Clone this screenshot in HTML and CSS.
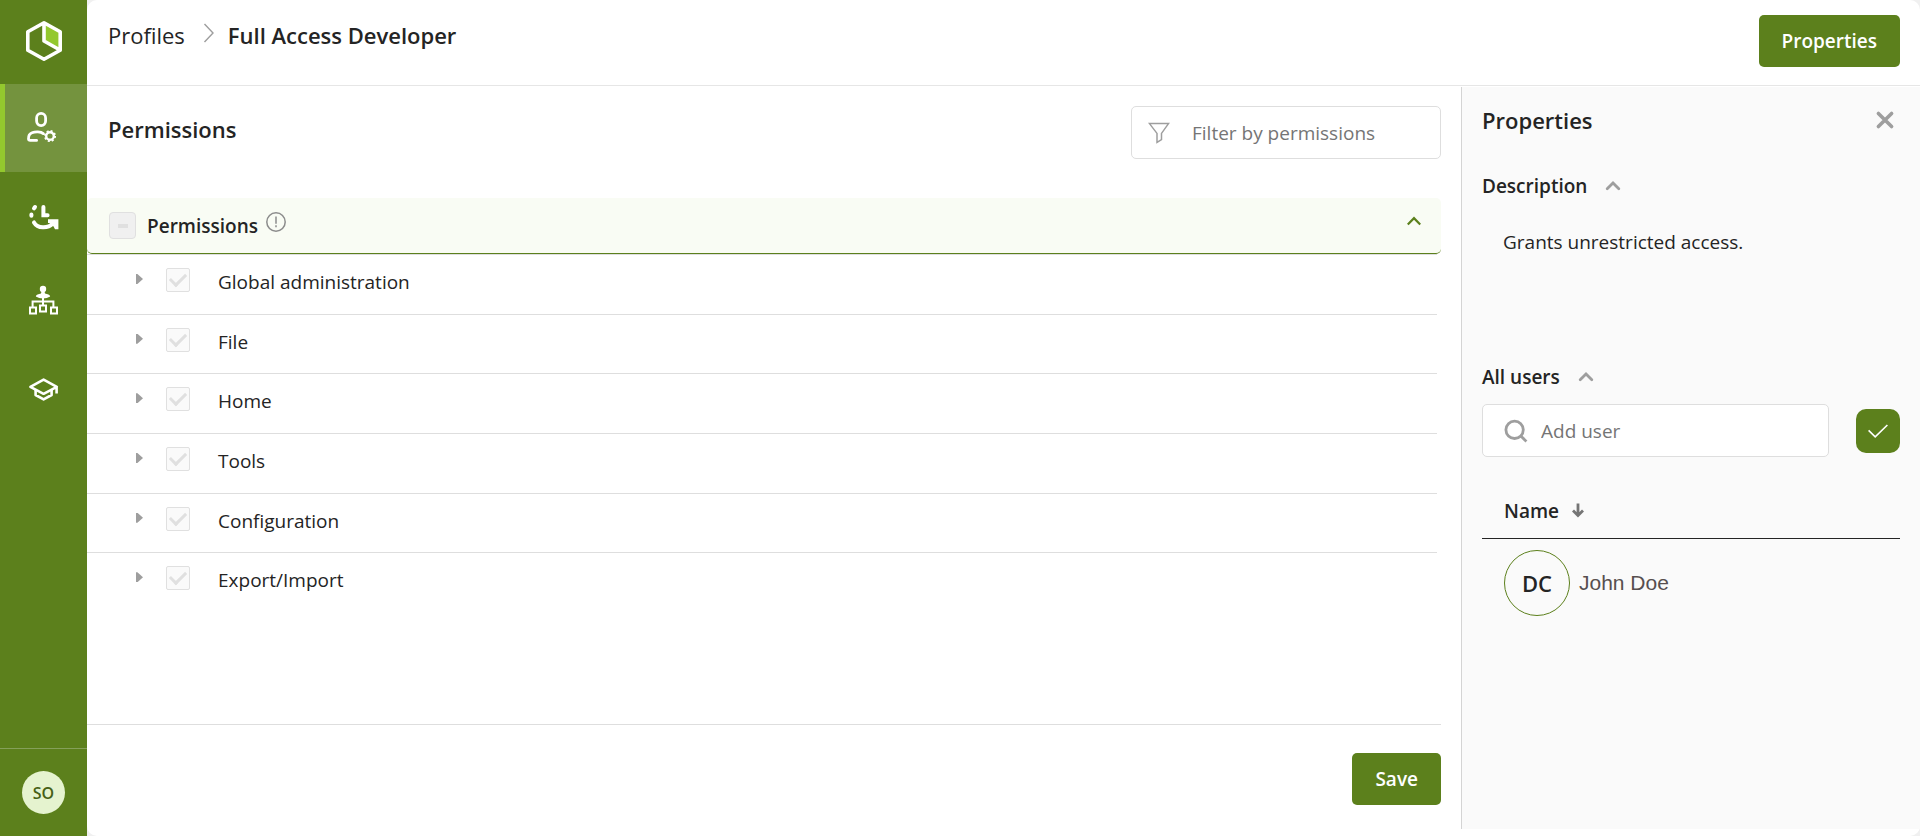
FILE: index.html
```html
<!DOCTYPE html>
<html lang="en">
<head>
    <meta charset="UTF-8">
    <meta name="viewport" content="width=device-width, initial-scale=1.0">
    <title>Full Access Developer - Profiles</title>
    <link rel="stylesheet" href="styles.css">
</head>
<body>

    <!-- Sidebar -->
    <nav class="sidebar">
        <a href="#" class="logo" aria-label="Home">
            <svg width="38" height="42" viewBox="0 1 38 42">
                <path d="M19 2.8 L34.7 11.5 V29 L19 19.8 Z" fill="#93c82e"/>
                <path d="M19 2.8 L35.2 11.8 V30.2 L19 39.2 L2.8 30.2 V11.8 Z M19 3 V21 L34.5 29.8" fill="none" stroke="#fff" stroke-width="3.6" stroke-linejoin="round"/>
            </svg>
        </a>
        <a href="#" class="nav-item active" aria-label="Profiles">
            <svg width="32" height="32" viewBox="2 1 32 32" fill="none" stroke="#fff" stroke-width="2.8" stroke-linecap="round">
                <rect x="10.6" y="2.4" width="9" height="12.2" rx="4.5"/>
                <path d="M17.3 22.6 C14.8 20.4 9.2 20.4 6 21.8 C3 23 2.4 26 2.5 28 Q2.6 29.4 4.2 29.4 H10.6"/>
                <circle cx="24" cy="25" r="3.8" stroke-width="2.4"/>
                <circle cx="24" cy="25" r="5.1" stroke-width="1.9" stroke-dasharray="2 2" stroke-linecap="butt"/>
            </svg>
        </a>
        <a href="#" class="nav-item" aria-label="Processes">
            <svg width="32" height="32" viewBox="0 0 32 32" fill="none" stroke="#fff" stroke-width="4" stroke-linecap="round">
                <path d="M15.4 7 V15.2 H19.6"/>
                <path d="M6 8.4 L7 7 M3.4 14.4 V15.8"/>
                <path d="M6 22.4 C9.6 28.6 19.6 29 25 23.4"/>
                <path d="M20 19.3 H30.4 V29.3 H27 L25.6 26.4 L21.4 23 H20 Z" fill="#fff" stroke="none"/>
            </svg>
        </a>
        <a href="#" class="nav-item" aria-label="Organization">
            <svg width="32" height="32" viewBox="0 4 32 32" fill="none" stroke="#fff" stroke-width="2">
                <circle cx="15" cy="5" r="3.2" fill="#fff" stroke="none"/>
                <path d="M13.6 7 H16.4 L17 9.6 C19.4 10 22 11 22.2 12.4 Q19 14.4 15 14.4 Q11 14.4 7.8 12.4 C8 11 10.6 10 13 9.6 Z" fill="#fff" stroke="none"/>
                <path d="M15 14 V21 M4.6 23 V17.4 H25.4 V23"/>
                <path d="M2 23.4 H8 V29.4 H2 Z M12 21.4 H18 V27.4 H12 Z M23 23.4 H29 V29.4 H23 Z"/>
            </svg>
        </a>
        <a href="#" class="nav-item" aria-label="Learning">
            <svg width="32" height="32" viewBox="0 3 32 32" fill="none" stroke="#fff" stroke-width="2.6" stroke-linejoin="round">
                <path d="M2.4 13.8 L15.6 6.6 L28.8 13.8 L15.6 20.8 Z M28.6 14 V20.4"/>
                <path d="M7.6 17 V22 L15.6 26.4 L23.6 22 V17"/>
            </svg>
        </a>
        <div class="sidebar-user">
            <button class="user-badge" type="button">SO</button>
        </div>
    </nav>

    <div class="page">
        <!-- Header -->
        <header class="header">
            <div class="breadcrumb">
                <a href="#">Profiles</a>
                <svg width="12" height="20" viewBox="0 0 12 20" fill="none" stroke="#9e9e9e" stroke-width="1.4">
                    <path d="M1.5 1 L10 10 L1.5 19"/>
                </svg>
                <h1>Full Access Developer</h1>
            </div>
            <button class="btn" type="button">Properties</button>
        </header>

        <div class="content">
            <!-- Permissions -->
            <main class="main">
                <div class="toolbar">
                    <h2>Permissions</h2>
                    <label class="field filter">
                        <svg width="22" height="22" viewBox="0 0 22 22" fill="none" stroke="#9e9e9e" stroke-width="1.5">
                            <path d="M1.5 1.6 H20.5 L13.5 11.4 V17.6 L9 20.4 V11.4 Z"/>
                        </svg>
                        <input type="text" placeholder="Filter by permissions" aria-label="Filter by permissions">
                    </label>
                </div>

                <div class="group-header">
                    <input type="checkbox" class="check-all" id="all" disabled>
                    <label for="all">Permissions</label>
                    <svg class="info" width="20" height="20" viewBox="0 0 20 20" fill="none" stroke="#8c8c8c" stroke-width="1.5">
                        <circle cx="10" cy="10" r="9.2"/>
                        <path d="M10 4.6 V11.8 M10 13.2 V15.2"/>
                    </svg>
                    <button class="icon-btn collapse" type="button" aria-label="Collapse">
                        <svg width="14" height="10" viewBox="0 0 14 10" fill="none" stroke="#5c801c" stroke-width="2.2">
                            <path d="M0.8 8.6 L7 2.2 L13.2 8.6"/>
                        </svg>
                    </button>
                </div>

                <ul class="permissions">
                    <li>
                        <button class="expand" type="button" aria-label="Expand"></button>
                        <input type="checkbox" id="p1" checked disabled>
                        <label for="p1">Global administration</label>
                    </li>
                    <li>
                        <button class="expand" type="button" aria-label="Expand"></button>
                        <input type="checkbox" id="p2" checked disabled>
                        <label for="p2">File</label>
                    </li>
                    <li>
                        <button class="expand" type="button" aria-label="Expand"></button>
                        <input type="checkbox" id="p3" checked disabled>
                        <label for="p3">Home</label>
                    </li>
                    <li>
                        <button class="expand" type="button" aria-label="Expand"></button>
                        <input type="checkbox" id="p4" checked disabled>
                        <label for="p4">Tools</label>
                    </li>
                    <li>
                        <button class="expand" type="button" aria-label="Expand"></button>
                        <input type="checkbox" id="p5" checked disabled>
                        <label for="p5">Configuration</label>
                    </li>
                    <li>
                        <button class="expand" type="button" aria-label="Expand"></button>
                        <input type="checkbox" id="p6" checked disabled>
                        <label for="p6">Export/Import</label>
                    </li>
                </ul>

                <div class="actions">
                    <button class="btn" type="button">Save</button>
                </div>
            </main>

            <!-- Properties panel -->
            <aside class="panel">
                <div class="panel-title">
                    <h2>Properties</h2>
                    <button class="icon-btn" type="button" aria-label="Close">
                        <svg width="18" height="18" viewBox="0 0 18 18" fill="none" stroke="#9e9e9e" stroke-width="3.6" stroke-linecap="round">
                            <path d="M2.4 2.4 L15.6 15.6 M15.6 2.4 L2.4 15.6"/>
                        </svg>
                    </button>
                </div>

                <section class="description">
                    <h3>
                        Description
                        <button class="icon-btn" type="button" aria-label="Collapse">
                            <svg width="16" height="10" viewBox="0 0 16 10" fill="none" stroke="#9e9e9e" stroke-width="2.8" stroke-linecap="round">
                                <path d="M2.2 7.8 L8 2 L13.8 7.8"/>
                            </svg>
                        </button>
                    </h3>
                    <p>Grants unrestricted access.</p>
                </section>

                <section class="users">
                    <h3>
                        All users
                        <button class="icon-btn" type="button" aria-label="Collapse">
                            <svg width="16" height="10" viewBox="0 0 16 10" fill="none" stroke="#9e9e9e" stroke-width="2.8" stroke-linecap="round">
                                <path d="M2.2 7.8 L8 2 L13.8 7.8"/>
                            </svg>
                        </button>
                    </h3>
                    <form class="add-user">
                        <label class="field">
                            <svg width="24" height="24" viewBox="0 0 24 24" fill="none" stroke="#9e9e9e" stroke-width="2.8">
                                <circle cx="10.6" cy="10.8" r="8.7"/>
                                <path d="M16.8 17 L22.4 22.4"/>
                            </svg>
                            <input type="text" placeholder="Add user" aria-label="Add user">
                        </label>
                        <button class="confirm" type="button" aria-label="Confirm">
                            <svg width="22" height="16" viewBox="0 0 22 16" fill="none" stroke="#fff" stroke-width="1.6">
                                <path d="M1.6 7.4 L8.2 13.8 L20.4 2"/>
                            </svg>
                        </button>
                    </form>

                    <table class="user-table">
                        <thead>
                            <tr>
                                <th>
                                    Name
                                    <svg width="12" height="15" viewBox="0 0 12 15" fill="none" stroke="#757575" stroke-width="2.8">
                                        <path d="M6 0.5 V12.6 M1 7.6 L6 12.6 L11 7.6"/>
                                    </svg>
                                </th>
                            </tr>
                        </thead>
                        <tbody>
                            <tr>
                                <td>
                                    <div class="user">
                                        <span class="avatar">DC</span>
                                        <span class="user-name">John Doe</span>
                                    </div>
                                </td>
                            </tr>
                        </tbody>
                    </table>
                </section>
            </aside>
        </div>
    </div>

</body>
</html>
```
FILE: styles.css
```css
/* General Reset */
* {
    margin: 0;
    padding: 0;
    box-sizing: border-box;
}

body {
    display: flex;
    min-height: 100vh;
    font-family: 'Open Sans', sans-serif;
    font-size: 19px;
    line-height: 28px;
    color: #242424;
    background-color: #f0f0f0;
}

a {
    color: inherit;
    text-decoration: none;
}

button,
input {
    font: inherit;
    color: inherit;
}

button {
    border: none;
    cursor: pointer;
}

svg {
    display: block;
    flex: none;
    overflow: visible;
}

h1, h2 {
    font-size: 22px;
    font-weight: 600;
}

h3 {
    display: flex;
    align-items: center;
    gap: 18px;
    font-size: 19px;
    font-weight: 600;
}

/* Sidebar */
.sidebar {
    display: flex;
    flex-direction: column;
    flex: none;
    width: 87px;
    background-color: #5c801c;
}

.logo,
.nav-item {
    display: flex;
    align-items: center;
    justify-content: center;
}

.logo {
    height: 84px;
}

.nav-item {
    height: 88px;
}

.nav-item.active {
    background-color: #74933e;
    box-shadow: inset 5px 0 #93c82e;
}

.sidebar-user {
    display: flex;
    align-items: center;
    justify-content: center;
    height: 88px;
    margin-top: auto;
    border-top: 1px solid #85a05a;
}

.user-badge {
    width: 43px;
    height: 43px;
    border-radius: 50%;
    background-color: #e5f3cf;
    color: #456015;
    font-size: 16px;
    font-weight: 600;
}

/* Page */
.page {
    display: flex;
    flex-direction: column;
    flex: 1;
    min-width: 0;
    border-radius: 10px;
    background-color: #fff;
}

.header {
    display: flex;
    justify-content: space-between;
    align-items: flex-start;
    height: 86px;
    padding: 15px 20px 0 21px;
    border-bottom: 1px solid #e6e6e6;
}

.breadcrumb {
    display: flex;
    align-items: center;
    padding-top: 6px;
    font-size: 22px;
}

.breadcrumb svg {
    margin: 0 13px 4px 18px;
}

.btn {
    height: 52px;
    padding: 0 23px;
    border-radius: 5px;
    background-color: #5c801c;
    color: #fff;
    font-weight: 600;
}

.icon-btn {
    background: none;
}

.content {
    display: flex;
    flex: 1;
}

/* Permissions */
.main {
    display: flex;
    flex-direction: column;
    flex: 1;
    min-width: 0;
    padding: 20px 20px 31px 0;
}

.toolbar {
    display: flex;
    justify-content: space-between;
    align-items: center;
    margin-bottom: 39px;
    padding-left: 21px;
}

.toolbar h2 {
    padding-bottom: 8px;
}

.field {
    display: flex;
    align-items: center;
    height: 53px;
    border: 1px solid #dedede;
    border-radius: 5px;
    background-color: #fff;
}

.field input {
    flex: 1;
    min-width: 0;
    border: none;
    outline: none;
    background: none;
}

.field input::placeholder {
    color: #757575;
}

.filter {
    gap: 22px;
    width: 310px;
    padding: 0 16px;
}

.group-header {
    display: flex;
    align-items: center;
    height: 56px;
    padding: 0 20px 0 22px;
    border-bottom: 1px solid #5c801c;
    border-radius: 5px;
    background-color: #f9fcf4;
    font-weight: 600;
}

.group-header label {
    margin: 0 8px 0 11px;
}

.info {
    margin-bottom: 8px;
}

.collapse {
    margin: 0 0 10px auto;
}

input[type="checkbox"] {
    display: grid;
    place-items: center;
    flex: none;
    appearance: none;
    width: 24px;
    height: 24px;
    border: 1px solid #e0e0e0;
    border-radius: 2px;
    background-color: #fafafa;
}

input[type="checkbox"]:checked::before {
    content: "";
    width: 13px;
    height: 7px;
    margin-bottom: 4px;
    border: solid #e0e0e0;
    border-width: 0 0 3px 3px;
    transform: rotate(-45deg);
}

input.check-all {
    width: 27px;
    height: 27px;
    border-radius: 4px;
    background-color: #f0f0f0;
}

.check-all::before {
    content: "";
    width: 10px;
    height: 4px;
    background-color: #e0e0e0;
}

.permissions {
    display: grid;
    grid-auto-rows: 1fr;
    height: 358px;
    margin-right: 4px;
    list-style: none;
}

.permissions li {
    display: flex;
    padding: 13px 0 0 49px;
    border-top: 1px solid #dedede;
}

.permissions label {
    margin-left: 28px;
}

.expand {
    width: 7px;
    height: 10px;
    margin: 6px 23px 0 0;
    background-color: #9e9e9e;
    clip-path: polygon(0 0, 20% 0, 100% 50%, 20% 100%, 0 100%);
}

.actions {
    display: flex;
    justify-content: flex-end;
    margin-top: auto;
    padding-top: 28px;
    border-top: 1px solid #dedede;
}

/* Properties panel */
.panel {
    flex: none;
    width: 459px;
    margin: 1px 0 7px;
    padding: 19px 20px 20px;
    border-left: 1px solid #d4d4d4;
    background-color: #fafafa;
}

.panel-title {
    display: flex;
    justify-content: space-between;
    align-items: center;
    margin-bottom: 38px;
    padding-right: 6px;
}

.description {
    min-height: 191px;
}

.description p {
    padding: 28px 0 0 21px;
}

.add-user {
    display: flex;
    align-items: center;
    gap: 27px;
    margin: 13px 0 40px;
}

.add-user .field {
    flex: 1;
    gap: 13px;
    padding: 0 21px;
}

.confirm {
    display: flex;
    align-items: center;
    justify-content: center;
    width: 44px;
    height: 44px;
    border-radius: 10px;
    background-color: #5c801c;
}

.user-table {
    width: 100%;
    border-collapse: collapse;
}

.user-table th {
    padding: 0 22px 13px;
    border-bottom: 1px solid #242424;
    font-weight: 600;
    text-align: left;
}

.user-table th svg {
    display: inline-block;
    margin-left: 8px;
}

.user-table td {
    padding: 11px 22px;
}

.user {
    display: flex;
    align-items: center;
    gap: 9px;
}

.avatar {
    width: 66px;
    height: 66px;
    border: 1px solid #5c801c;
    border-radius: 50%;
    font-size: 22px;
    font-weight: 600;
    line-height: 64px;
    text-align: center;
}

.user-name {
    color: #574f4f;
    font-family: 'Liberation Sans', sans-serif;
    font-size: 21px;
}
```
